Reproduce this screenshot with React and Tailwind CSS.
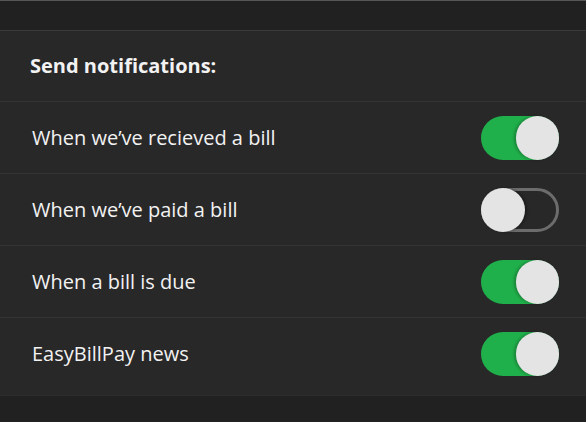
const items = [
  { label: "When we’ve recieved a bill", on: true },
  { label: "When we’ve paid a bill", on: false },
  { label: "When a bill is due", on: true },
  { label: "EasyBillPay news", on: true },
];

function Toggle({ on }) {
  if (on) {
    return (
      <div className="relative w-[78px] h-[44px] rounded-full bg-[#20b04b]">
        <div className="absolute right-0 top-0 w-[43px] h-[44px] rounded-full bg-[#e4e4e4] shadow-[-2px_0_3px_rgba(0,0,0,0.25)]" />
      </div>
    );
  }
  return (
    <div className="relative w-[78px] h-[44px] rounded-full border-[3px] border-[#6c6c6c]">
      <div className="absolute -left-[3px] -top-[3px] w-[44px] h-[44px] rounded-full bg-[#e4e4e4] shadow-[2px_0_3px_rgba(0,0,0,0.3)]" />
    </div>
  );
}

export default function App() {
  return (
    <div className="h-[422px] w-[586px] bg-[#212121] flex flex-col text-[#f2f2f2] font-['Open_Sans',sans-serif] overflow-hidden">
      <div className="h-[30px] border-t border-[#575757]" />
      <div className="bg-[#282828] border-t border-[#3a3a3a] pb-[6px] border-b border-b-[#2c2c2c]">
        <div className="h-[70px] flex items-center px-[30px]">
          <h2 className="text-[20px] font-bold">Send notifications:</h2>
        </div>
        {items.map((item) => (
          <div
            key={item.label}
            className="h-[72px] border-t border-[#343434] flex items-center justify-between pl-[32px] pr-[27px]"
          >
            <span className="text-[20px]">{item.label}</span>
            <Toggle on={item.on} />
          </div>
        ))}
      </div>
    </div>
  );
}
